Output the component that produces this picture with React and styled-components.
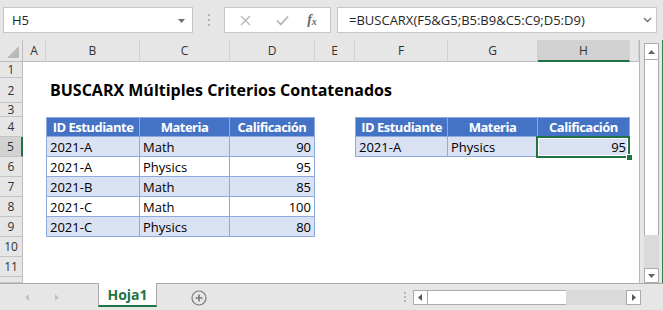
import React from 'react'
import styled, { createGlobalStyle } from 'styled-components'

const GREEN = '#217346'
const BLUE = '#4472c4'
const BAND = '#d9e1f2'
const LINE = '#8ea9db'
const CHROME = '#e6e6e6'

const GlobalStyle = createGlobalStyle`
  html, body {
    margin: 0;
    padding: 0;
  }
  body {
    background: ${CHROME};
    font-family: "Open Sans", "Liberation Sans", sans-serif;
  }
`

const Window = styled.div`
  width: 663px;
  height: 310px;
  display: flex;
  flex-direction: column;
  background: ${CHROME};
  overflow: hidden;
`

/* ---------- formula bar ---------- */

const FormulaBar = styled.div`
  height: 40px;
  flex: none;
  display: flex;
  align-items: flex-start;
  padding: 7px 0 0 3px;
  box-sizing: border-box;
`

const NameBox = styled.div`
  width: 190px;
  height: 26px;
  box-sizing: border-box;
  background: #fff;
  border: 1px solid #c6c6c6;
  display: flex;
  align-items: center;
  justify-content: space-between;
  padding: 0 7px 0 8px;
  font-size: 13px;
  color: #262626;
`

const Grip = styled.div`
  width: 31px;
  height: 26px;
  display: flex;
  flex-direction: column;
  align-items: center;
  justify-content: center;
  gap: 3px;
  span {
    width: 2px;
    height: 2px;
    background: #b4b4b4;
  }
`

const FxBox = styled.div`
  width: 107px;
  height: 26px;
  box-sizing: border-box;
  background: #fff;
  border: 1px solid #c6c6c6;
  display: flex;
  align-items: center;
`

const FxButton = styled.div`
  width: 16px;
  height: 16px;
  margin-left: ${p => p.$ml}px;
  display: flex;
  align-items: center;
  justify-content: center;
`

const FxLabel = styled.span`
  font-family: "Liberation Serif", "DejaVu Serif", serif;
  font-style: italic;
  font-weight: bold;
  font-size: 14px;
  color: #6a6a6a;
  sub {
    font-size: 10px;
    vertical-align: -1px;
  }
`

const FormulaInput = styled.div`
  width: 320px;
  height: 26px;
  margin-left: 6px;
  box-sizing: border-box;
  background: #fff;
  border: 1px solid #c6c6c6;
  display: flex;
  align-items: center;
  justify-content: space-between;
  padding: 0 4px 0 11px;
  font-size: 13px;
  color: #262626;
`

/* ---------- sheet ---------- */

const SheetArea = styled.div`
  height: 243px;
  flex: none;
  display: flex;
`

const Grid = styled.div`
  width: 640px;
  box-sizing: border-box;
  border-right: 1px solid #b6b6b6;
  background: #fff;
  display: grid;
  grid-template-columns: 23px 23px 94px 90px 85px 40px 93px 90px 92px 1fr;
  grid-template-rows: 22px 16px 25px 14px repeat(8, 20px) 1fr;
  overflow: hidden;
`

const Corner = styled.div`
  background: ${CHROME};
  border-right: 1px solid #bdbdbd;
  border-bottom: 1px solid #bdbdbd;
  display: flex;
  align-items: flex-end;
  justify-content: flex-end;
  padding: 0 3px 3px 0;
`

const ColHead = styled.div`
  box-sizing: border-box;
  background: ${p => (p.$active ? '#d2d2d2' : CHROME)};
  border-right: 1px solid #d0d0d0;
  border-bottom: ${p => (p.$active ? `2px solid ${GREEN}` : '1px solid #bdbdbd')};
  display: flex;
  align-items: center;
  justify-content: center;
  font-size: 12px;
  color: #333;
`

const RowHead = styled.div`
  box-sizing: border-box;
  background: ${p => (p.$active ? '#d2d2d2' : CHROME)};
  border-right: ${p => (p.$active ? `2px solid ${GREEN}` : '1px solid #bdbdbd')};
  border-bottom: 1px solid #c4c4c4;
  display: flex;
  align-items: center;
  justify-content: center;
  font-size: 12px;
  color: #333;
`

const Blank = styled.div`
  background: #fff;
`

const Title = styled.div`
  grid-column: 3 / -1;
  display: flex;
  align-items: flex-end;
  padding: 0 0 2px 4px;
  font-size: 16px;
  font-weight: bold;
  color: #000;
  white-space: nowrap;
`

const Cell = styled.div`
  position: relative;
  box-sizing: border-box;
  background: ${p => (p.$kind === 'head' ? BLUE : p.$kind === 'band' ? BAND : '#fff')};
  color: ${p => (p.$kind === 'head' ? '#fff' : '#000')};
  font-weight: ${p => (p.$kind === 'head' ? 'bold' : 'normal')};
  letter-spacing: ${p => (p.$kind === 'head' ? '-0.5px' : 'normal')};
  font-size: 13px;
  border-right: 1px solid ${LINE};
  border-bottom: 1px solid ${LINE};
  border-left: ${p => (p.$first ? `1px solid ${LINE}` : 'none')};
  border-top: ${p => (p.$kind === 'head' ? `1px solid ${LINE}` : 'none')};
  display: flex;
  align-items: center;
  justify-content: ${p => (p.$kind === 'head' ? 'center' : p.$num ? 'flex-end' : 'flex-start')};
  padding: 0 3px 0 3px;
  white-space: nowrap;

  ${p =>
    p.$selected &&
    `
    &::after {
      content: '';
      position: absolute;
      left: -2px;
      top: -1px;
      right: -1px;
      bottom: -2px;
      border: 2px solid ${GREEN};
      box-shadow: inset 0 0 0 1px #fff;
      z-index: 2;
    }
    &::before {
      content: '';
      position: absolute;
      right: -4px;
      bottom: -5px;
      width: 5px;
      height: 5px;
      background: ${GREEN};
      border: 1px solid #fff;
      z-index: 3;
    }
  `}
`

const VScroll = styled.div`
  width: 23px;
  box-sizing: border-box;
  padding: 3px 0 0 4px;
  border-right: 1px solid #3f7d58;
  display: flex;
  flex-direction: column;
`

const ScrollBtn = styled.div`
  width: 15px;
  height: ${p => p.$h || 15}px;
  box-sizing: border-box;
  background: #fff;
  border: 1px solid #ababab;
  display: flex;
  align-items: center;
  justify-content: center;
  flex: none;
`

const VThumb = styled.div`
  width: 15px;
  height: 175px;
  box-sizing: border-box;
  background: #fff;
  border-left: 1px solid #ababab;
  border-right: 1px solid #ababab;
  flex: none;
`

const VTrack = styled.div`
  width: 15px;
  flex: 1;
  background: #dadada;
`

/* ---------- sheet tabs ---------- */

const TabBar = styled.div`
  height: 27px;
  flex: none;
  box-sizing: border-box;
  border-top: 1px solid #ababab;
  display: flex;
  align-items: flex-start;
`

const TabNav = styled.div`
  width: 98px;
  height: 26px;
  display: flex;
  align-items: center;
  padding-left: 24px;
  box-sizing: border-box;
  gap: 22px;
`

const Tab = styled.div`
  width: 59px;
  height: 24px;
  box-sizing: border-box;
  margin-top: -1px;
  background: #fff;
  border-left: 1px solid #ababab;
  border-right: 1px solid #ababab;
  border-bottom: 2px solid ${GREEN};
  display: flex;
  align-items: center;
  justify-content: center;
  font-size: 14px;
  font-weight: bold;
  color: ${GREEN};
`

const AddSheet = styled.div`
  margin: 6px 0 0 34px;
  width: 16px;
  height: 16px;
  display: flex;
`

const TabGrip = styled.div`
  margin-left: auto;
  width: 16px;
  height: 26px;
  display: flex;
  flex-direction: column;
  align-items: center;
  justify-content: center;
  gap: 2px;
  span {
    width: 2px;
    height: 2px;
    background: #b4b4b4;
  }
`

const HScroll = styled.div`
  width: 228px;
  height: 15px;
  margin: 6px 22px 0 0;
  display: flex;
`

const HThumb = styled.div`
  width: 138px;
  box-sizing: border-box;
  background: #fff;
  border-top: 1px solid #ababab;
  border-bottom: 1px solid #ababab;
`

const HTrack = styled.div`
  flex: 1;
  background: #dadada;
`

const Arrow = ({ dir, color = '#595959', size = 7 }) => {
  const pts = {
    up: '0,6 3.5,2 7,6',
    down: '0,2 3.5,6 7,2',
    left: '5,0 1,3.5 5,7',
    right: '2,0 6,3.5 2,7',
  }[dir]
  return (
    <svg width={size} height={size} viewBox="0 0 7 7">
      <polygon points={pts} fill={color} />
    </svg>
  )
}

const cols = ['A', 'B', 'C', 'D', 'E', 'F', 'G', 'H']

const table1 = [
  ['ID Estudiante', 'Materia', 'Calificación'],
  ['2021-A', 'Math', 90],
  ['2021-A', 'Physics', 95],
  ['2021-B', 'Math', 85],
  ['2021-C', 'Math', 100],
  ['2021-C', 'Physics', 80],
]

const table2 = [
  ['ID Estudiante', 'Materia', 'Calificación'],
  ['2021-A', 'Physics', 95],
]

// which table cell sits at (row, col index), if any
const lookup = (row, ci) => {
  const t = row - 4
  if (ci >= 1 && ci <= 3 && t >= 0 && t < table1.length) {
    return { value: table1[t][ci - 1], t, first: ci === 1 }
  }
  if (ci >= 5 && ci <= 7 && t >= 0 && t < table2.length) {
    return { value: table2[t][ci - 5], t, first: ci === 5, selected: row === 5 && ci === 7 }
  }
  return null
}

const renderRow = row => {
  const out = [
    <RowHead key={`rh${row}`} $active={row === 5}>
      {row <= 11 ? row : ''}
    </RowHead>,
  ]
  if (row === 2) {
    out.push(<Blank key="2A" />)
    out.push(<Title key="title">BUSCARX Múltiples Criterios Contatenados</Title>)
    return out
  }
  cols.forEach((c, ci) => {
    const hit = lookup(row, ci)
    if (!hit) {
      out.push(<Blank key={`${c}${row}`} />)
      return
    }
    const kind = hit.t === 0 ? 'head' : hit.t % 2 === 1 ? 'band' : 'plain'
    out.push(
      <Cell
        key={`${c}${row}`}
        $kind={kind}
        $first={hit.first}
        $num={typeof hit.value === 'number'}
        $selected={hit.selected}
      >
        {hit.value}
      </Cell>
    )
  })
  out.push(<Blank key={`z${row}`} />)
  return out
}

export default function App() {
  const rows = Array.from({ length: 12 }, (_, i) => i + 1)
  return (
    <Window>
      <GlobalStyle />
      <FormulaBar>
        <NameBox>
          <span>H5</span>
          <Arrow dir="down" color="#6f6f6f" />
        </NameBox>
        <Grip>
          <span />
          <span />
          <span />
        </Grip>
        <FxBox>
          <FxButton $ml={12}>
            <svg width="11" height="11" viewBox="0 0 11 11">
              <path d="M1 1 L10 10 M10 1 L1 10" stroke="#b4b4b4" strokeWidth="1.3" fill="none" />
            </svg>
          </FxButton>
          <FxButton $ml={21}>
            <svg width="13" height="11" viewBox="0 0 13 11">
              <path d="M1 5.5 L4.8 9.5 L12 1.5" stroke="#b4b4b4" strokeWidth="1.8" fill="none" />
            </svg>
          </FxButton>
          <FxButton $ml={14}>
            <FxLabel>
              f<sub>x</sub>
            </FxLabel>
          </FxButton>
        </FxBox>
        <FormulaInput>
          <span>=BUSCARX(F5&amp;G5;B5:B9&amp;C5:C9;D5:D9)</span>
          <svg width="9" height="6" viewBox="0 0 9 6">
            <path d="M1 1 L4.5 4.5 L8 1" stroke="#707070" strokeWidth="1.4" fill="none" />
          </svg>
        </FormulaInput>
      </FormulaBar>

      <SheetArea>
        <Grid>
          <Corner>
            <svg width="12" height="12" viewBox="0 0 12 12">
              <polygon points="12,0 12,12 0,12" fill="#b9b9b9" />
            </svg>
          </Corner>
          {cols.map(c => (
            <ColHead key={c} $active={c === 'H'}>
              {c}
            </ColHead>
          ))}
          <ColHead />
          {rows.map(renderRow)}
        </Grid>
        <VScroll>
          <ScrollBtn $h={17}>
            <Arrow dir="up" color="#606060" />
          </ScrollBtn>
          <VThumb />
          <VTrack />
          <ScrollBtn $h={15}>
            <Arrow dir="down" color="#606060" />
          </ScrollBtn>
        </VScroll>
      </SheetArea>

      <TabBar>
        <TabNav>
          <Arrow dir="left" color="#c2c2c2" />
          <Arrow dir="right" color="#c2c2c2" />
        </TabNav>
        <Tab>Hoja1</Tab>
        <AddSheet>
          <svg width="16" height="16" viewBox="0 0 16 16">
            <circle cx="8" cy="8" r="7" stroke="#7a7a7a" strokeWidth="1.2" fill="none" />
            <path d="M8 4.5 V11.5 M4.5 8 H11.5" stroke="#7a7a7a" strokeWidth="1.6" />
          </svg>
        </AddSheet>
        <TabGrip>
          <span />
          <span />
          <span />
        </TabGrip>
        <HScroll>
          <ScrollBtn>
            <Arrow dir="left" color="#595959" />
          </ScrollBtn>
          <HThumb />
          <HTrack />
          <ScrollBtn>
            <Arrow dir="right" color="#595959" />
          </ScrollBtn>
        </HScroll>
      </TabBar>
    </Window>
  )
}
